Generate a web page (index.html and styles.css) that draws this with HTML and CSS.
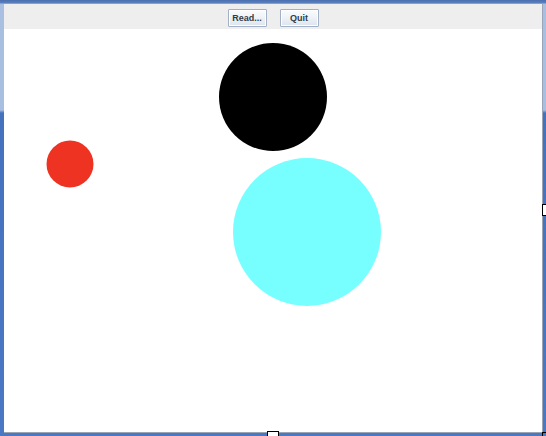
FILE: index.html
```html
<!DOCTYPE html>
<html>
<head>
<meta charset="utf-8">
<link rel="stylesheet" href="styles.css">
</head>
<body>
<div class="frame">
  <div class="content">
    <div class="toolbar">
      <button class="btn">Read...</button>
      <button class="btn">Quit</button>
    </div>
    <div class="canvas">
      <svg class="drawing" width="538" height="404" viewBox="0 0 538 404">
        <circle cx="269" cy="68" r="54" fill="#000000"/>
        <circle cx="66" cy="135" r="23.5" fill="#ee3322"/>
        <circle cx="303" cy="203" r="74" fill="#77ffff"/>
      </svg>
    </div>
  </div>
  <div class="handle handle-right"></div>
  <div class="handle handle-bottom"></div>
  <div class="corner"></div>
</div>
</body>
</html>
```
FILE: styles.css
```css
html, body {
  margin: 0;
  padding: 0;
  background: #ffffff;
}

.frame {
  position: relative;
  width: 546px;
  height: 436px;
  box-sizing: border-box;
  padding: 4px 3px 3px 4px;
  background: linear-gradient(to bottom, #4b6fae 0, #5a80c0 3px, #a9bfe2 4px, #a9bfe2 110px, #4472bd 113px, #4a78c2 100%);
  overflow: hidden;
}

.content {
  height: 100%;
  display: flex;
  flex-direction: column;
  box-sizing: border-box;
  border-right: 1px solid #9aa6b8;
  border-bottom: 1px solid #9aa6b8;
  background: #ffffff;
}

.toolbar {
  height: 25px;
  flex: none;
  background: #eeeeee;
  display: flex;
  justify-content: center;
  align-items: flex-start;
  gap: 13px;
  padding-top: 5px;
  box-sizing: border-box;
}

.btn {
  width: 39px;
  height: 18px;
  margin: 0;
  padding: 0;
  border: 1px solid #a3b1c6;
  border-radius: 1px;
  background: linear-gradient(to bottom, #fbfcfd 0%, #eef2f7 50%, #dde4ee 100%);
  font-family: "Liberation Sans", Arial, sans-serif;
  font-weight: bold;
  font-size: 9px;
  color: #333b47;
  box-shadow: inset 0 0 0 1px #ffffff;
}

.canvas {
  flex: 1;
  background: #ffffff;
  overflow: hidden;
}

.drawing {
  display: block;
}

.handle {
  position: absolute;
  background: #ffffff;
  border: 1px solid #000000;
  box-sizing: border-box;
}

.handle-right {
  left: 542px;
  top: 204px;
  width: 10px;
  height: 12px;
}

.handle-bottom {
  left: 267px;
  top: 431px;
  width: 12px;
  height: 10px;
}

.corner {
  position: absolute;
  left: 542px;
  top: 432px;
  width: 10px;
  height: 10px;
  border-left: 1px solid #000000;
  border-top: 1px solid #000000;
}
```
